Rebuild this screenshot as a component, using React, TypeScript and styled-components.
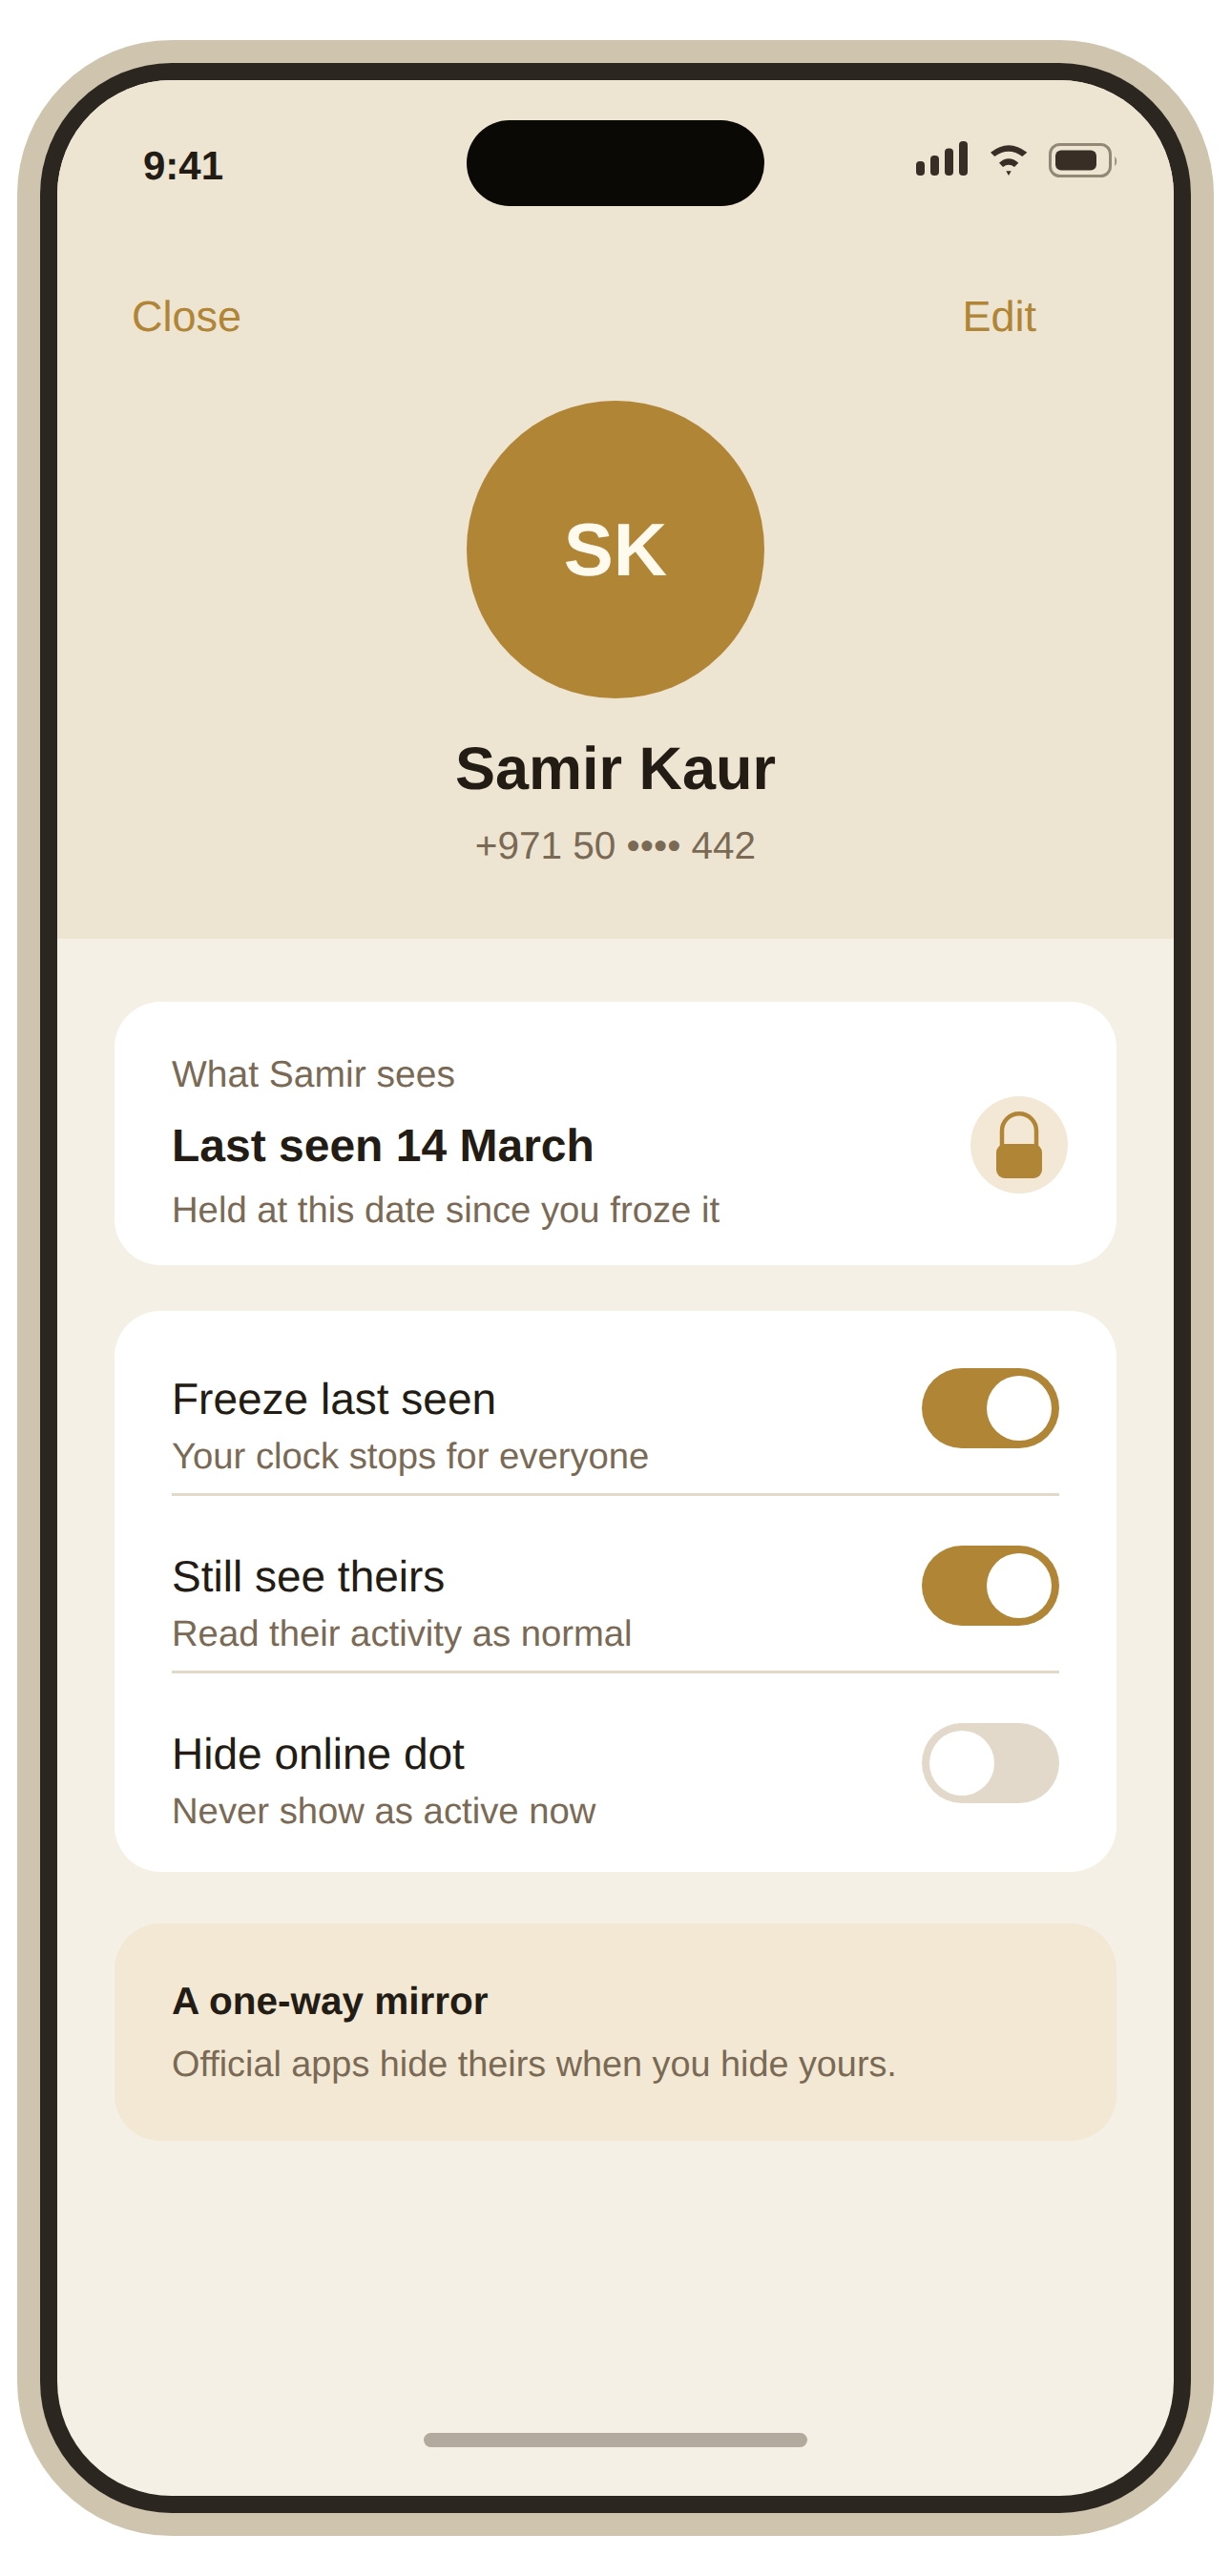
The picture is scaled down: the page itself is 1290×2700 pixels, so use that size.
import React from 'react';
import styled, { createGlobalStyle } from 'styled-components';

const GlobalStyle = createGlobalStyle`
  html, body {
    margin: 0;
    padding: 0;
    background: #ffffff;
    font-family: "Liberation Sans", Arial, sans-serif;
    text-rendering: geometricPrecision;
  }
  * {
    box-sizing: border-box;
  }
`;

const gold = '#b08536';
const ink = '#231c14';
const muted = '#7a6a55';

const Page = styled.div`
  width: 1290px;
  height: 2700px;
  padding: 42px 18px;
`;

const Shell = styled.div`
  width: 1254px;
  height: 2616px;
  padding: 24px;
  background: #cfc4ad;
  border-radius: 162px;
`;

const Bezel = styled.div`
  height: 2568px;
  padding: 18px;
  background: #2b2620;
  border-radius: 138px;
`;

const Screen = styled.div`
  height: 2532px;
  display: flex;
  flex-direction: column;
  overflow: hidden;
  background: #f5f0e5;
  border-radius: 120px;
`;

const Header = styled.header`
  height: 900px;
  flex: none;
  background: #ede4d2;
  display: flex;
  flex-direction: column;
  align-items: center;
`;

const StatusBar = styled.div`
  width: 100%;
  height: 179px;
  padding: 0 59px 0 90px;
  margin-top: 42px;
  display: grid;
  grid-template-columns: 339px 312px 1fr;
  align-items: start;
`;

const Time = styled.div`
  font-size: 42px;
  font-weight: 700;
  line-height: 48px;
  margin-top: 24px;
  color: ${ink};
`;

const Island = styled.div`
  width: 312px;
  height: 90px;
  background: #0a0906;
  border-radius: 45px;
`;

const StatusIcons = styled.div`
  display: flex;
  justify-content: flex-end;
  align-items: flex-end;
  height: 60px;
  padding-top: 21px;
`;

const WifiSlot = styled.div`
  margin: 0 22px 0 24px;
  display: flex;
`;

const NavRow = styled.nav`
  width: 100%;
  padding: 0 144px 0 78px;
  display: flex;
  justify-content: space-between;
`;

const NavLink = styled.span`
  font-size: 45px;
  line-height: 54px;
  color: ${gold};
`;

const Avatar = styled.div`
  width: 312px;
  height: 312px;
  margin-top: 61px;
  border-radius: 50%;
  background: ${gold};
  color: #fff9ee;
  font-size: 78px;
  font-weight: 700;
  display: flex;
  align-items: center;
  justify-content: center;
`;

const Name = styled.h1`
  margin: 36px 0 0;
  font-size: 63px;
  line-height: 76px;
  font-weight: 700;
  color: ${ink};
`;

const Phone = styled.div`
  margin-top: 17px;
  font-size: 40.5px;
  line-height: 50px;
  color: ${muted};
`;

const Body = styled.main`
  flex: 1;
  padding: 66px 60px 51px;
  display: flex;
  flex-direction: column;
`;

const Card = styled.section`
  background: #ffffff;
  border-radius: 48px;
`;

const StatusCard = styled(Card)`
  height: 276px;
  padding: 53px 51px 0 60px;
  display: flex;
  justify-content: space-between;
`;

const Eyebrow = styled.div`
  font-size: 39px;
  line-height: 48px;
  color: ${muted};
`;

const Headline = styled.div`
  margin-top: 22px;
  font-size: 48px;
  line-height: 58px;
  font-weight: 700;
  color: ${ink};
`;

const Detail = styled.div`
  margin-top: 14px;
  font-size: 38.25px;
  line-height: 48px;
  color: ${muted};
`;

const LockBadge = styled.div`
  width: 102px;
  height: 102px;
  margin-top: 46px;
  border-radius: 50%;
  background: #f3e8d6;
  display: flex;
  align-items: center;
  justify-content: center;
`;

const SettingsCard = styled(Card)`
  margin-top: 48px;
  padding: 36px 60px 24px;
  display: flex;
  flex-direction: column;
  gap: 28px;
`;

const Row = styled.div<{ $last?: boolean }>`
  height: ${props => (props.$last ? '156px' : '158px')};
  padding-top: 24px;
  display: flex;
  justify-content: space-between;
  align-items: flex-start;
  border-bottom: ${props => (props.$last ? 'none' : '3px solid #e2d9ca')};
`;

const RowText = styled.div`
  padding-top: 5px;
`;

const RowTitle = styled.div`
  font-size: 46px;
  line-height: 54px;
  color: ${ink};
`;

const RowSub = styled.div`
  margin-top: 11px;
  font-size: 38.25px;
  line-height: 46px;
  color: ${muted};
`;

const Toggle = styled.div<{ $on: boolean }>`
  width: 144px;
  height: 84px;
  padding: 8px;
  border-radius: 42px;
  background: ${props => (props.$on ? gold : '#e2d9ca')};
  display: flex;
  justify-content: ${props => (props.$on ? 'flex-end' : 'flex-start')};
`;

const Knob = styled.div`
  width: 68px;
  height: 68px;
  border-radius: 50%;
  background: #ffffff;
`;

const NoteCard = styled.section`
  height: 228px;
  margin-top: 54px;
  padding: 56px 60px 0;
  border-radius: 48px;
  background: #f3e8d4;
`;

const NoteTitle = styled.div`
  font-size: 40.5px;
  line-height: 50px;
  font-weight: 700;
  color: ${ink};
`;

const NoteText = styled.div`
  margin-top: 19px;
  font-size: 37.8px;
  line-height: 46px;
  color: ${muted};
`;

const HomeBar = styled.div`
  width: 402px;
  height: 15px;
  margin: auto auto 0;
  border-radius: 8px;
  background: #b3aa9e;
`;

const SignalIcon = () => (
  <svg width="54" height="38" viewBox="0 0 54 38" fill="#382e26">
    <rect x="0" y="21" width="9" height="15" rx="4" />
    <rect x="15" y="15" width="9" height="21" rx="4" />
    <rect x="30" y="7.5" width="9" height="28.5" rx="4" />
    <rect x="45" y="0" width="9" height="36" rx="4" />
  </svg>
);

const WifiIcon = () => (
  <svg width="39" height="34" viewBox="0 0 39 34" fill="#382e26">
    <path d="M0 7.7 Q19 -7.4 38.3 7.7 L33.3 12 Q19 1.4 4.3 12 Z" />
    <path d="M9 18.7 Q19 10 29.3 18.7 L25 23 Q19 18.4 13 23 Z" />
    <path d="M16.3 27.3 L21.7 27.3 L19 32 Z" />
  </svg>
);

const BatteryIcon = () => (
  <svg width="72" height="36" viewBox="0 0 72 36">
    <rect x="1.5" y="1.5" width="63" height="33" rx="10" fill="none" stroke="#938878" strokeWidth="3" />
    <rect x="7" y="7.5" width="43" height="21" rx="6" fill="#382e26" />
    <path d="M69.3 14 C71.8 16 71.8 22 69.3 24 Z" fill="#938878" />
  </svg>
);

const LockIcon = () => (
  <svg width="48" height="70" viewBox="0 0 48 70">
    <path d="M6 38 V20.25 A18 18 0 0 1 42 20.25 V38" fill="none" stroke={gold} strokeWidth="4.5" />
    <rect x="0" y="34" width="48" height="36" rx="9" fill={gold} />
  </svg>
);

const settings = [
  { title: 'Freeze last seen', sub: 'Your clock stops for everyone', on: true },
  { title: 'Still see theirs', sub: 'Read their activity as normal', on: true },
  { title: 'Hide online dot', sub: 'Never show as active now', on: false },
];

const App: React.FC = () => {
  return (
    <Page>
      <GlobalStyle />
      <Shell>
        <Bezel>
          <Screen>
            <Header>
              <StatusBar>
                <Time>9:41</Time>
                <Island />
                <StatusIcons>
                  <SignalIcon />
                  <WifiSlot>
                    <WifiIcon />
                  </WifiSlot>
                  <BatteryIcon />
                </StatusIcons>
              </StatusBar>
              <NavRow>
                <NavLink>Close</NavLink>
                <NavLink>Edit</NavLink>
              </NavRow>
              <Avatar>SK</Avatar>
              <Name>Samir Kaur</Name>
              <Phone>+971 50 •••• 442</Phone>
            </Header>
            <Body>
              <StatusCard>
                <div>
                  <Eyebrow>What Samir sees</Eyebrow>
                  <Headline>Last seen 14 March</Headline>
                  <Detail>Held at this date since you froze it</Detail>
                </div>
                <LockBadge>
                  <LockIcon />
                </LockBadge>
              </StatusCard>
              <SettingsCard>
                {settings.map((item, index) => (
                  <Row key={item.title} $last={index === settings.length - 1}>
                    <RowText>
                      <RowTitle>{item.title}</RowTitle>
                      <RowSub>{item.sub}</RowSub>
                    </RowText>
                    <Toggle $on={item.on}>
                      <Knob />
                    </Toggle>
                  </Row>
                ))}
              </SettingsCard>
              <NoteCard>
                <NoteTitle>A one-way mirror</NoteTitle>
                <NoteText>Official apps hide theirs when you hide yours.</NoteText>
              </NoteCard>
              <HomeBar />
            </Body>
          </Screen>
        </Bezel>
      </Shell>
    </Page>
  );
};

export default App;
